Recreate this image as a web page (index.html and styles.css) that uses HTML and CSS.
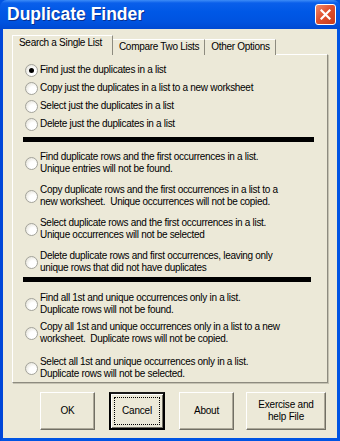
FILE: index.html
```html
<!DOCTYPE html>
<html lang="en">
<head>
  <meta charset="UTF-8">
  <title>Duplicate Finder</title>
  <link rel="stylesheet" href="styles.css">
</head>
<body>
<div class="window">
  <div class="titlebar">
    <span class="title">Duplicate Finder</span>
    <button class="close" title="Close">
      <svg width="11" height="11" viewBox="0 0 11 11">
        <path d="M1.5 1.5 L9.5 9.5 M9.5 1.5 L1.5 9.5" stroke="#fff" stroke-width="2.2" stroke-linecap="square"/>
      </svg>
    </button>
  </div>

  <div class="client">
    <div class="tabs">
      <div class="tab active">Search a Single List</div>
      <div class="tab">Compare Two Lists</div>
      <div class="tab">Other Options</div>
    </div>

    <div class="panel">
      <div class="group first">
        <label class="opt"><input class="radio" type="radio" name="mode" checked><span>Find just the duplicates in a list</span></label>
        <label class="opt"><input class="radio" type="radio" name="mode"><span>Copy just the duplicates in a list to a new worksheet</span></label>
        <label class="opt"><input class="radio" type="radio" name="mode"><span>Select just the duplicates in a list</span></label>
        <label class="opt"><input class="radio" type="radio" name="mode"><span>Delete just the duplicates in a list</span></label>
      </div>

      <div class="bar"></div>

      <div class="group second">
        <label class="opt"><input class="radio" type="radio" name="mode"><span>Find duplicate rows and the first occurrences in a list.<br>Unique entries will not be found.</span></label>
        <label class="opt"><input class="radio" type="radio" name="mode"><span>Copy duplicate rows and the first occurrences in a list to a<br>new worksheet.&nbsp; Unique occurrences will not be copied.</span></label>
        <label class="opt"><input class="radio" type="radio" name="mode"><span>Select duplicate rows and the first occurrences in a list.<br>Unique occurrences will not be selected</span></label>
        <label class="opt"><input class="radio" type="radio" name="mode"><span>Delete duplicate rows and first occurrences, leaving only<br>unique rows that did not have duplicates</span></label>
      </div>

      <div class="bar short"></div>

      <div class="group third">
        <label class="opt"><input class="radio" type="radio" name="mode"><span>Find all 1st and unique occurrences only in a list.<br>Duplicate rows will not be found.</span></label>
        <label class="opt"><input class="radio" type="radio" name="mode"><span>Copy all 1st and unique occurrences only in a list to a new<br>worksheet.&nbsp; Duplicate rows will not be copied.</span></label>
        <label class="opt spaced"><input class="radio" type="radio" name="mode"><span>Select all 1st and unique occurrences only in a list.<br>Duplicate rows will not be selected.</span></label>
      </div>
    </div>

    <div class="buttons">
      <button class="btn">OK</button>
      <button class="btn default"><span class="focus">Cancel</span></button>
      <button class="btn">About</button>
      <button class="btn wide">Exercise and<br>help File</button>
    </div>
  </div>
</div>
</body>
</html>
```

FILE: styles.css
```css
body {
  margin: 0;
  font-family: "Liberation Sans", Arial, sans-serif;
  font-size: 10px;
  letter-spacing: -0.3px;
  color: #000;
}

.window {
  width: 340px;
  height: 441px;
  display: flex;
  flex-direction: column;
  background: #0054e3;
}

.titlebar {
  height: 29px;
  flex: none;
  display: flex;
  align-items: center;
  justify-content: space-between;
  padding: 0 4px 0 7px;
  background: linear-gradient(#3d8cf7 0, #0a5fea 3px, #0058e6 40%, #0053e0 75%, #0049d2 100%);
  border-radius: 7px 7px 0 0;
}

.title {
  color: #fff;
  font-weight: bold;
  font-size: 17.5px;
  letter-spacing: 0;
  text-shadow: 1px 1px #0a2f8e;
}

.close {
  width: 21px;
  height: 21px;
  padding: 0;
  border: 1px solid #fff;
  border-radius: 3px;
  background: linear-gradient(135deg, #f08b6c, #e0512f 45%, #c83c1c);
  display: flex;
  align-items: center;
  justify-content: center;
  margin-top: -1px;
}

.client {
  flex: 1;
  background: #ece9d8;
  border: 3px solid #0054e3;
  border-top: none;
  border-left-color: #0046d8;
  padding: 8px 9px 0 9px;
  display: flex;
  flex-direction: column;
}

.tabs {
  display: flex;
  align-items: flex-end;
  height: 18px;
  margin-bottom: -1px;
  position: relative;
  z-index: 1;
}

.tab {
  height: 15px;
  padding: 0 5px 0 6px;
  line-height: 14px;
  background: #ece9d8;
  border-top: 1px solid #fff;
  border-right: 1px solid #8d8b7f;
  white-space: nowrap;
}

.tab.active {
  height: 19px;
  line-height: 13px;
  padding: 0 10px 0 6px;
  border-left: 1px solid #fff;
}

.panel {
  height: 329px;
  box-sizing: border-box;
  border: 1px solid;
  border-color: #fff #8d8b7f #8d8b7f #fff;
  box-shadow: 1px 1px 0 #c5c2b2;
  padding: 6px 0 0 12px;
}

.group {
  display: flex;
  flex-direction: column;
}

.opt {
  display: flex;
  align-items: center;
  line-height: 12px;
}

.first .opt {
  height: 18px;
}

.second .opt {
  height: 24px;
  margin-top: 9px;
}

.third .opt {
  height: 24px;
  margin-top: 5px;
}

.third .opt:first-child {
  margin-top: 10px;
}

.third .opt.spaced {
  margin-top: 11px;
}

.radio {
  appearance: none;
  -webkit-appearance: none;
  width: 13px;
  height: 13px;
  margin: 0 2px 0 0;
  flex: none;
  box-sizing: border-box;
  border: 1px solid #a3a39b;
  border-radius: 50%;
  background: radial-gradient(circle at 65% 65%, #fff 35%, #dcd9cc 100%);
  position: relative;
}

.radio:checked::after {
  content: "";
  position: absolute;
  left: 3px;
  top: 3px;
  width: 5px;
  height: 5px;
  border-radius: 50%;
  background: #000;
}

.bar {
  width: 291px;
  height: 5px;
  margin: 4px 0 0 -2px;
  background: #000;
}

.bar.short {
  width: 288px;
  margin-top: 3px;
}

.buttons {
  display: flex;
  margin: 9px 0 0 28px;
}

.btn {
  width: 55px;
  height: 38px;
  margin-right: 14px;
  padding: 0;
  font-family: inherit;
  font-size: 10px;
  line-height: 12px;
  letter-spacing: -0.2px;
  background: #ece9d8;
  border: 1px solid;
  border-color: #fff #716f64 #716f64 #fff;
  box-shadow: inset -1px -1px #aca899;
}

.btn.default {
  width: 56px;
  border: 2px solid #000;
  border-top-color: #1a1a1a;
  box-shadow: inset 1px 1px #fff, inset -1px -1px #716f64;
  display: flex;
  align-items: center;
  justify-content: center;
}

.focus {
  display: flex;
  align-items: center;
  justify-content: center;
  width: 44px;
  height: 26px;
  border: 1px dotted #000;
}

.btn.wide {
  width: 80px;
  margin-left: -2px;
  margin-right: 0;
}
```
